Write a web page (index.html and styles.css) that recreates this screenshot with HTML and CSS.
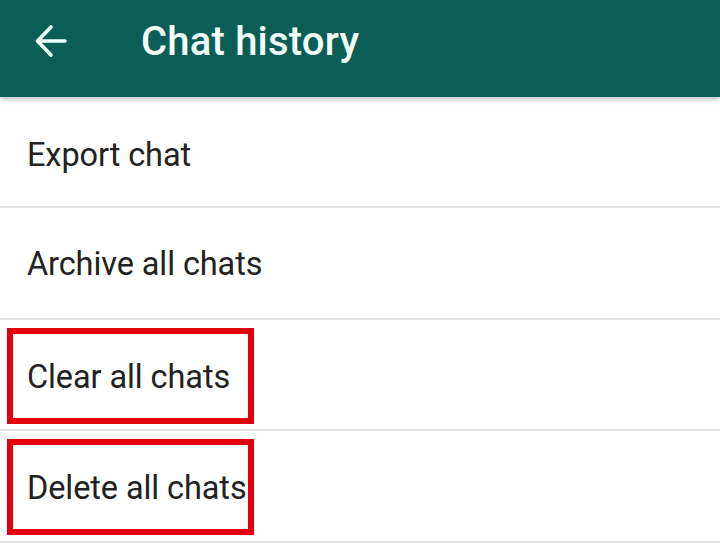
FILE: index.html
```html
<!DOCTYPE html>
<html>
<head>
<meta charset="utf-8">
<link rel="stylesheet" href="styles.css">
</head>
<body>
<header class="appbar">
  <svg class="back" width="34" height="34" viewBox="0 0 34 34" aria-hidden="true">
    <path d="M31 17H4M17 3L3.5 17L17 31" fill="none" stroke="#f4fffc" stroke-width="3.6" stroke-linecap="round" stroke-linejoin="round"/>
  </svg>
  <h1 class="title">Chat history</h1>
</header>
<main class="list">
  <div class="row first"><span class="label">Export chat</span></div>
  <div class="row"><span class="label">Archive all chats</span></div>
  <div class="row marked"><span class="mark"><span class="label">Clear all chats</span></span></div>
  <div class="row marked"><span class="mark"><span class="label">Delete all chats</span></span></div>
</main>
</body>
</html>
```
FILE: styles.css
```css
html, body {
  margin: 0;
  padding: 0;
  background: #ffffff;
  font-family: Roboto, "Liberation Sans", sans-serif;
}
body {
  width: 720px;
  height: 554px;
  overflow: hidden;
}
.appbar {
  position: relative;
  z-index: 1;
  height: 97px;
  background: #0b5e56;
  display: flex;
  align-items: center;
  box-shadow: 0 3px 5px rgba(0, 0, 0, 0.22);
}
.back {
  margin-left: 34px;
  margin-top: -16px;
}
.title {
  margin: -14px 0 0 73px;
  font-size: 40px;
  font-weight: 500;
  color: #f4fffc;
  letter-spacing: 0.2px;
}
.list {
  display: flex;
  flex-direction: column;
}
.row {
  height: 109.5px;
  border-bottom: 2px solid #e4e4e4;
  display: flex;
  align-items: center;
  padding-left: 27px;
}
.row.first {
  box-sizing: border-box;
  height: 111px;
  padding-top: 4px;
}
.label {
  font-size: 32.5px;
  color: #222222;
  white-space: nowrap;
  letter-spacing: -0.1px;
  padding-top: 3px;
}
.row.first .label {
  padding-top: 2px;
}
.mark .label {
  padding-top: 2px;
}
.row.marked {
  padding-left: 7px;
}
.mark {
  box-sizing: border-box;
  width: 247px;
  height: 96px;
  border: 6px solid #e5000d;
  display: flex;
  align-items: center;
  padding-left: 14px;
  margin-top: 3px;
}
```
